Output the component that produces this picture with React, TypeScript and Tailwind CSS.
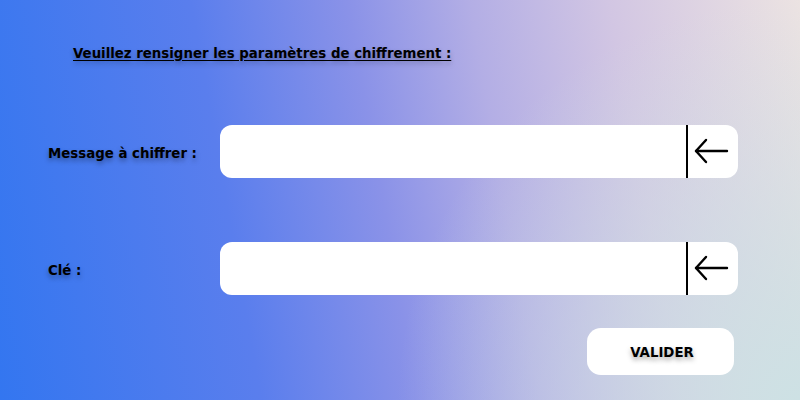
import React from "react"

function ArrowLeft() {
  return (
    <svg width="36" height="28" viewBox="0 0 36 28" fill="none" stroke="black" strokeWidth="2.4" strokeLinecap="round" strokeLinejoin="round">
      <path d="M34 14H3" />
      <path d="M13 3L3 14l10 11" />
    </svg>
  )
}

function Field({ label }: { label: string }) {
  return (
    <div className="flex items-center">
      <label className="w-[172px] pt-[4px] text-[13.33px] font-bold text-black [text-shadow:0_3px_5px_rgba(0,0,0,0.35)]">
        {label}
      </label>
      <div className="flex h-[53px] w-[518px] items-stretch overflow-hidden rounded-[12px] bg-white">
        <input className="w-[466px] bg-transparent px-4 text-[14px] outline-none" />
        <div className="w-[2px] bg-black" />
        <button className="flex flex-1 items-center justify-center pr-[4px] pb-[2px]">
          <ArrowLeft />
        </button>
      </div>
    </div>
  )
}

export default function App() {
  return (
    <div className="h-[400px] w-[800px] overflow-hidden bg-[radial-gradient(circle_at_100%_100%,rgba(205,225,228,1),rgba(205,225,228,0)_45%),linear-gradient(80deg,#3376f0,#5a7eed_30%,#8a92e8_48%,#b3aee5_62%,#d2c6e3_78%,#ece3e2)] font-['DejaVu_Sans',sans-serif]">
      <div className="pl-[73px] pt-[44px]">
        <h1 className="text-[13.33px] font-bold leading-5 text-black underline underline-offset-2 [text-shadow:0_3px_5px_rgba(0,0,0,0.3)]">
          Veuillez rensigner les paramètres de chiffrement :
        </h1>
      </div>
      <div className="mt-[61px] flex flex-col gap-[64px] pl-[48px]">
        <Field label="Message à chiffrer :" />
        <Field label="Clé :" />
      </div>
      <div className="mt-[33px] flex pl-[587px]">
        <button className="h-[47px] w-[147px] pl-[3px] pt-[3px] rounded-[14px] bg-white text-[13.33px] font-bold text-black [text-shadow:0_3px_5px_rgba(0,0,0,0.35)]">
          VALIDER
        </button>
      </div>
    </div>
  )
}
